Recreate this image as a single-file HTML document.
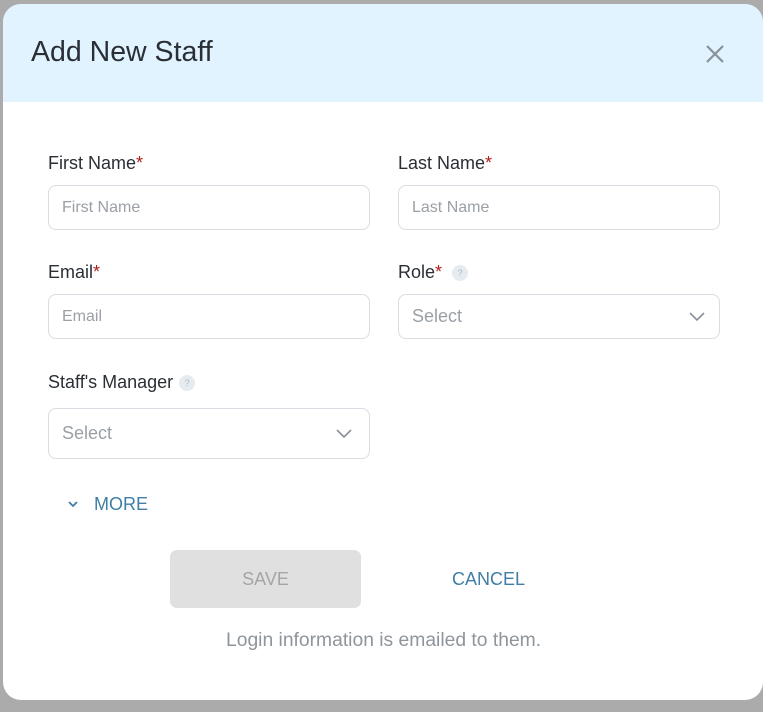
<!DOCTYPE html>
<html><head><style>
*{box-sizing:border-box;margin:0;padding:0}
body{width:763px;height:712px;background:#ababab;font-family:"Liberation Sans",sans-serif;position:relative;overflow:hidden}
.m{position:absolute;left:3px;top:4px;width:760px;height:696px;background:#fff;border-radius:18px;overflow:hidden}
.h{position:absolute;left:0;top:0;right:0;height:98px;background:#e0f3fe}
.t{position:absolute;left:28px;top:32px;font-size:28.5px;color:#2a2f36}
.a{position:absolute;font-size:18px;color:#2a2f36}
.a b{color:#b01c1c;font-weight:normal}
.i{position:absolute;height:45px;border:1px solid #d9dde3;border-radius:8px;font-size:16px;color:#9aa0a6;padding-left:13px;line-height:43px}
.s{height:51px;line-height:49px;font-size:18px;color:#9aa0a6}
.q{display:inline-block;width:16px;height:16px;border-radius:50%;background:#e6ebf0;color:#b0b8c0;font-size:9px;text-align:center;line-height:16px;vertical-align:2px;margin-left:6px}
svg.c{position:absolute}
</style></head><body>
<div class="m">
<div class="h"></div>
<div class="t">Add New Staff</div>
<svg class="c" style="left:703px;top:41px" width="18" height="18"><path d="M1 1L17 17M17 1L1 17" stroke="#8a9099" stroke-width="2.2"/></svg>
<div class="a" style="left:45px;top:149px">First Name<b>*</b></div>
<div class="a" style="left:395px;top:149px">Last Name<b>*</b></div>
<div class="i" style="left:45px;top:181px;width:322px">First Name</div>
<div class="i" style="left:395px;top:181px;width:322px">Last Name</div>
<div class="a" style="left:45px;top:258px">Email<b>*</b></div>
<div class="a" style="left:395px;top:258px">Role<b>*</b><span class="q" style="margin-left:10px">?</span></div>
<div class="i" style="left:45px;top:290px;width:322px">Email</div>
<div class="i s" style="left:395px;top:290px;width:322px;height:45px;line-height:43px">Select</div>
<svg class="c" style="left:686px;top:308px" width="16" height="10"><path d="M1 1L8 8L15 1" stroke="#8a9099" stroke-width="1.6" fill="none"/></svg>
<div class="a" style="left:45px;top:368px">Staff's Manager<span class="q">?</span></div>
<div class="i s" style="left:45px;top:404px;width:322px">Select</div>
<svg class="c" style="left:333px;top:425px" width="16" height="10"><path d="M1 1L8 8L15 1" stroke="#8a9099" stroke-width="1.6" fill="none"/></svg>
<svg class="c" style="left:65px;top:497px" width="10" height="7"><path d="M1 1L5 5L9 1" stroke="#3f7ea6" stroke-width="1.8" fill="none"/></svg>
<div class="a" style="left:91px;top:490px;color:#3f7ea6;font-size:18px">MORE</div>
<div style="position:absolute;left:167px;top:546px;width:191px;height:58px;background:#e0e0e0;border-radius:7px;color:#a5a5a5;font-size:18px;text-align:center;line-height:58px">SAVE</div>
<div class="a" style="left:449px;top:565px;color:#3f7ea6;font-size:18px">CANCEL</div>
<div class="a" style="left:223px;top:626px;color:#8e959c;font-size:19.3px">Login information is emailed to them.</div>
</div>
</body></html>
